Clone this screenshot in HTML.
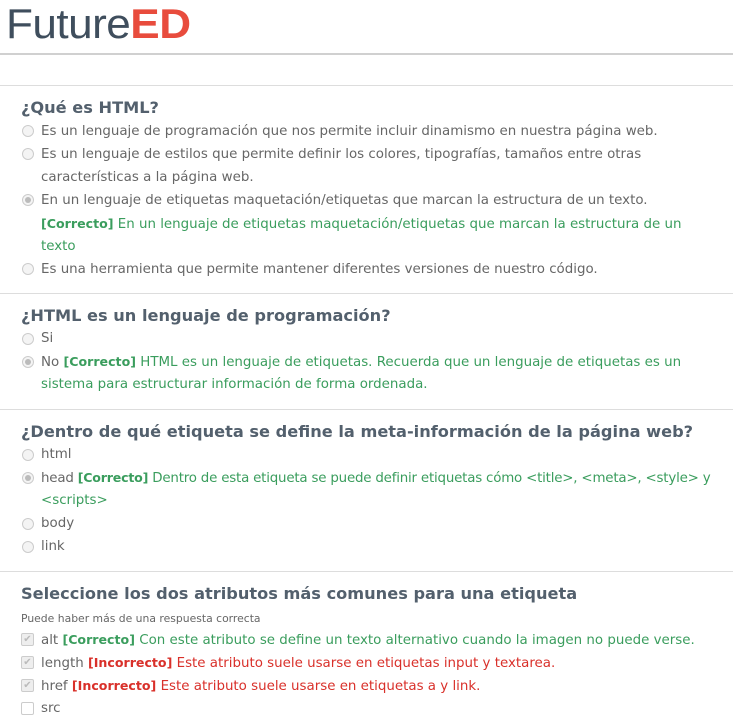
<!DOCTYPE html>
<html><head><meta charset="utf-8"><style>
body{margin:0;width:733px;height:721px;overflow:hidden;background:#fff;font-family:"DejaVu Sans","Liberation Sans",sans-serif;color:#666;position:relative}
.a{position:absolute;left:41px;font-size:13.4px;white-space:nowrap;line-height:16px}
.h{position:absolute;left:21px;font-size:16.2px;font-weight:bold;color:#53606d;white-space:nowrap}
.hr{position:absolute;left:0;width:733px;height:1px;background:#ddd}
.r{position:absolute;left:22px;width:10px;height:10px;border:1px solid #ccc;border-radius:50%;background:#f4f4f4}
.r.s::after{content:"";position:absolute;left:2px;top:2px;width:6px;height:6px;border-radius:50%;background:#bbb}
.c{position:absolute;left:21px;width:11px;height:11px;border:1px solid #ccc;border-radius:2px;background:#eee;font-size:10px;line-height:11px;text-align:center;color:#bbb}
.g{color:#3a9d5d}.gb{color:#3a9d5d;font-weight:bold;font-size:12.6px}.rd{color:#d9302a}.rb{color:#d9302a;font-weight:bold;font-size:12.6px}
</style></head><body>
<div style="position:absolute;left:6px;top:0;font-family:'Liberation Sans',sans-serif;font-size:42px;line-height:48px;color:#3f4e5d;letter-spacing:-0.5px;transform:scaleX(1.05);transform-origin:left">Future<span style="color:#e84c3d;font-weight:bold">ED</span></div>
<div class="hr" style="top:53px;height:2px;background:#d0d0d0"></div>
<div class="hr" style="top:85px"></div>

<div class="h" style="top:98px">¿Qué es HTML?</div>
<div class="r" style="top:125px"></div><div class="a" style="top:124px">Es un lenguaje de programación que nos permite incluir dinamismo en nuestra página web.</div>
<div class="r" style="top:148px"></div><div class="a" style="top:147px">Es un lenguaje de estilos que permite definir los colores, tipografías, tamaños entre otras</div>
<div class="a" style="top:170px">características a la página web.</div>
<div class="r s" style="top:194px"></div><div class="a" style="top:193px">En un lenguaje de etiquetas maquetación/etiquetas que marcan la estructura de un texto.</div>
<div class="a g" style="top:216px"><span class="gb">[Correcto]</span> En un lenguaje de etiquetas maquetación/etiquetas que marcan la estructura de un</div>
<div class="a g" style="top:239px">texto</div>
<div class="r" style="top:263px"></div><div class="a" style="top:262px">Es una herramienta que permite mantener diferentes versiones de nuestro código.</div>
<div class="hr" style="top:293px"></div>

<div class="h" style="top:306px">¿HTML es un lenguaje de programación?</div>
<div class="r" style="top:333px"></div><div class="a" style="top:331px">Si</div>
<div class="r s" style="top:356px"></div><div class="a" style="top:354px">No <span class="gb">[Correcto]</span> <span class="g">HTML es un lenguaje de etiquetas. Recuerda que un lenguaje de etiquetas es un</span></div>
<div class="a g" style="top:377px">sistema para estructurar información de forma ordenada.</div>
<div class="hr" style="top:409px"></div>

<div class="h" style="top:422px">¿Dentro de qué etiqueta se define la meta-información de la página web?</div>
<div class="r" style="top:449px"></div><div class="a" style="top:447px">html</div>
<div class="r s" style="top:472px"></div><div class="a" style="top:470px;letter-spacing:-0.2px">head <span class="gb">[Correcto]</span> <span class="g">Dentro de esta etiqueta se puede definir etiquetas cómo &lt;title&gt;, &lt;meta&gt;, &lt;style&gt; y</span></div>
<div class="a g" style="top:493px">&lt;scripts&gt;</div>
<div class="r" style="top:518px"></div><div class="a" style="top:516px">body</div>
<div class="r" style="top:541px"></div><div class="a" style="top:539px">link</div>
<div class="hr" style="top:571px"></div>

<div class="h" style="top:584px">Seleccione los dos atributos más comunes para una etiqueta</div>
<div class="a" style="left:21px;top:611px;font-size:10.8px">Puede haber más de una respuesta correcta</div>
<div class="c" style="top:633px">✔</div><div class="a" style="top:632px">alt <span class="gb">[Correcto]</span> <span class="g">Con este atributo se define un texto alternativo cuando la imagen no puede verse.</span></div>
<div class="c" style="top:656px">✔</div><div class="a" style="top:655px">length <span class="rb">[Incorrecto]</span> <span class="rd">Este atributo suele usarse en etiquetas input y textarea.</span></div>
<div class="c" style="top:679px">✔</div><div class="a" style="top:678px">href <span class="rb">[Incorrecto]</span> <span class="rd">Este atributo suele usarse en etiquetas a y link.</span></div>
<div class="c" style="top:702px;background:#fff"></div><div class="a" style="top:701px">src</div>
</body></html>
